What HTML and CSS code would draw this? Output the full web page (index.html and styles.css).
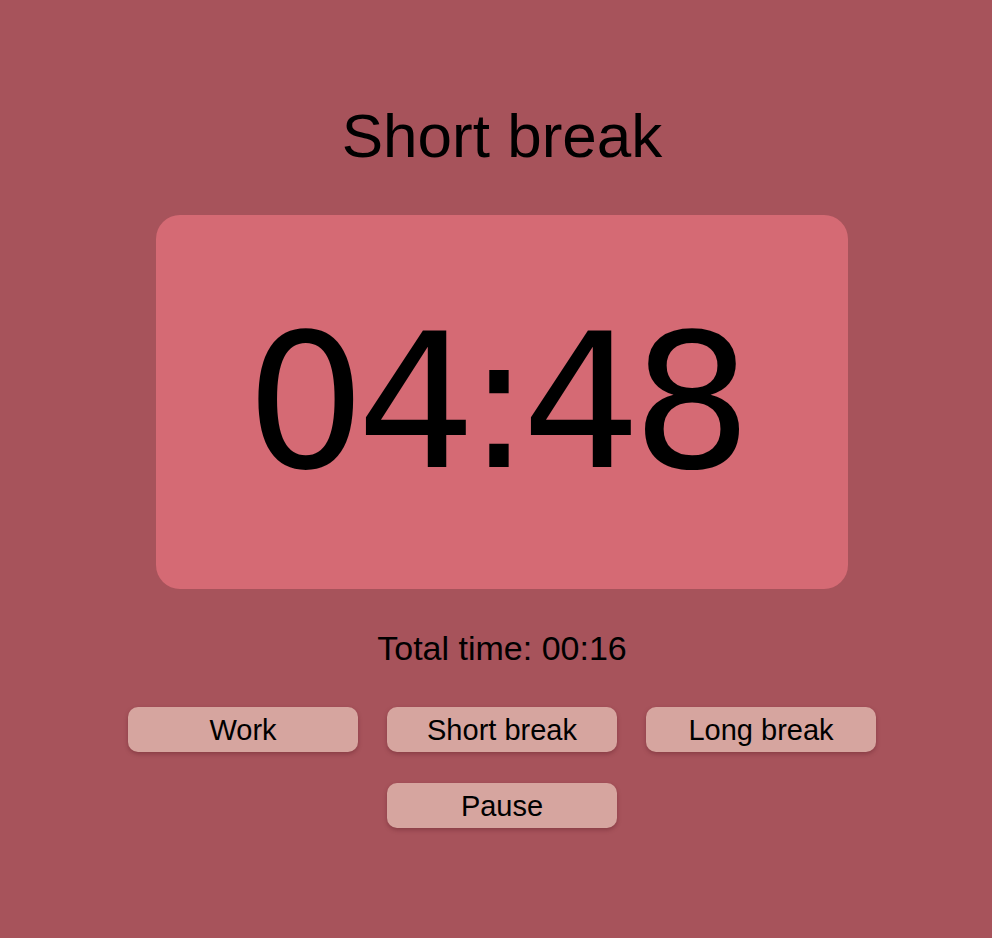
FILE: index.html
```html
<!DOCTYPE html>
<html>
<head>
<meta charset="utf-8">
<link rel="stylesheet" href="styles.css">
</head>
<body>
<main class="app">
  <h1 class="mode">Short break</h1>
  <div class="timer"><span class="digits">04:48</span></div>
  <p class="total">Total time: 00:16</p>
  <div class="buttons">
    <button class="btn">Work</button>
    <button class="btn">Short break</button>
    <button class="btn">Long break</button>
    <button class="btn">Pause</button>
  </div>
</main>
</body>
</html>
```

FILE: styles.css
```css
html, body {
  margin: 0;
  padding: 0;
  background: #a7535b;
  height: 100%;
}
.app {
  display: flex;
  flex-direction: column;
  align-items: center;
  padding: 100px 0 0 12px;
  font-family: "Liberation Sans", Arial, sans-serif;
  color: #000;
}
.mode {
  margin: 0;
  font-size: 62px;
  line-height: 71px;
  font-weight: normal;
}
.timer {
  margin-top: 44px;
  width: 692px;
  height: 374px;
  background: #d56a74;
  border-radius: 24px;
  display: flex;
  align-items: center;
  justify-content: center;
}
.digits {
  font-family: "DejaVu Sans", Verdana, sans-serif;
  font-size: 188px;
  line-height: 1;
  letter-spacing: -9px;
  margin-right: 15px;
}
.total {
  margin: 39px 0 0;
  font-size: 34px;
  line-height: 40px;
}
.buttons {
  margin-top: 39px;
  width: 748px;
  display: flex;
  flex-wrap: wrap;
  justify-content: center;
  gap: 31px 29px;
}
.btn {
  width: 230px;
  height: 45px;
  border: none;
  border-radius: 10px;
  background: #d6a59f;
  box-shadow: 0 2px 4px rgba(80, 20, 30, 0.35);
  font-family: "Liberation Sans", Arial, sans-serif;
  font-size: 29px;
  color: #000;
  padding: 2px 0 0;
}
```
